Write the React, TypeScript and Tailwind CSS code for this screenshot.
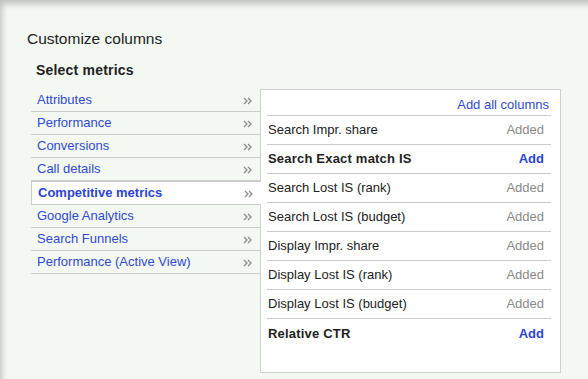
import React from "react";

const categories = [
    "Attributes",
    "Performance",
    "Conversions",
    "Call details",
    "Competitive metrics",
    "Google Analytics",
    "Search Funnels",
    "Performance (Active View)",
];

const metrics: { name: string; added: boolean }[] = [
    { name: "Search Impr. share", added: true },
    { name: "Search Exact match IS", added: false },
    { name: "Search Lost IS (rank)", added: true },
    { name: "Search Lost IS (budget)", added: true },
    { name: "Display Impr. share", added: true },
    { name: "Display Lost IS (rank)", added: true },
    { name: "Display Lost IS (budget)", added: true },
    { name: "Relative CTR", added: false },
];

const selected = "Competitive metrics";

// small double chevron used in the category list
function Chevrons() {
    return (
        <svg width="9" height="8" viewBox="0 0 9 8" className="mt-[2px]">
            <path d="M1 1 L4 4 L1 7 M5 1 L8 4 L5 7" fill="none" stroke="#8c8c8c" strokeWidth="1.3" />
        </svg>
    );
}

export default function App() {
    return (
        <div
            className="relative w-[588px] h-[379px] overflow-hidden bg-[#f4f8f3] text-[#222] shadow-[inset_5px_7px_6px_-3px_rgba(0,0,0,0.22)] pt-[30px] pl-[27px]"
            style={{ fontFamily: '"Liberation Sans", Arial, sans-serif' }}
        >
            <h1 className="text-[15.5px] leading-[18px] font-normal">Customize columns</h1>
            <h2 className="mt-[14px] ml-[9px] text-[14px] leading-[16px] font-bold tracking-[0.2px]">Select metrics</h2>

            <div className="mt-[11px] ml-[4px] flex items-start">
                {/* category list */}
                <ul className="w-[229px] shrink-0">
                    {categories.map((c) => {
                        const isSel = c === selected;
                        return (
                            <li
                                key={c}
                                className={
                                    isSel
                                        ? "relative z-10 -mr-[1px] -mt-[1px] flex h-[25px] items-center justify-between border-t-2 border-l border-b border-[#cccccc] bg-white pl-[6px] pr-[8px] text-[13px] font-bold text-[#2a46cf]"
                                        : "flex h-[23px] items-center justify-between border-b border-[#cccccc] pl-[6px] pr-[8px] text-[13px] text-[#2f4bd2]"
                                }
                            >
                                <span className="leading-[16px]">{c}</span>
                                <Chevrons />
                            </li>
                        );
                    })}
                </ul>

                {/* metrics panel */}
                <div className="w-[301px] h-[284px] shrink-0 border border-[#cfcfcf] bg-white pl-[6px] pr-[9px]">
                    <div className="flex justify-end border-b border-[#cccccc] pt-[7px] pb-[2px] pr-[2px]">
                        <span className="text-[13px] leading-[16px] text-[#2f4bd2]">Add all columns</span>
                    </div>
                    {metrics.map((m, i) => (
                        <div
                            key={m.name}
                            className={`flex h-[29px] items-center justify-between pl-[1px] pr-[7px] text-[13px] leading-[16px] ${
                                i < metrics.length - 1 ? "border-b border-[#cccccc]" : ""
                            }`}
                        >
                            <span className={m.added ? "text-[#222]" : "font-bold tracking-[0.2px] text-[#222]"}>{m.name}</span>
                            {m.added ? (
                                <span className="text-[#8a8a8a]">Added</span>
                            ) : (
                                <span className="font-bold text-[#2a46cf]">Add</span>
                            )}
                        </div>
                    ))}
                </div>
            </div>
        </div>
    );
}
